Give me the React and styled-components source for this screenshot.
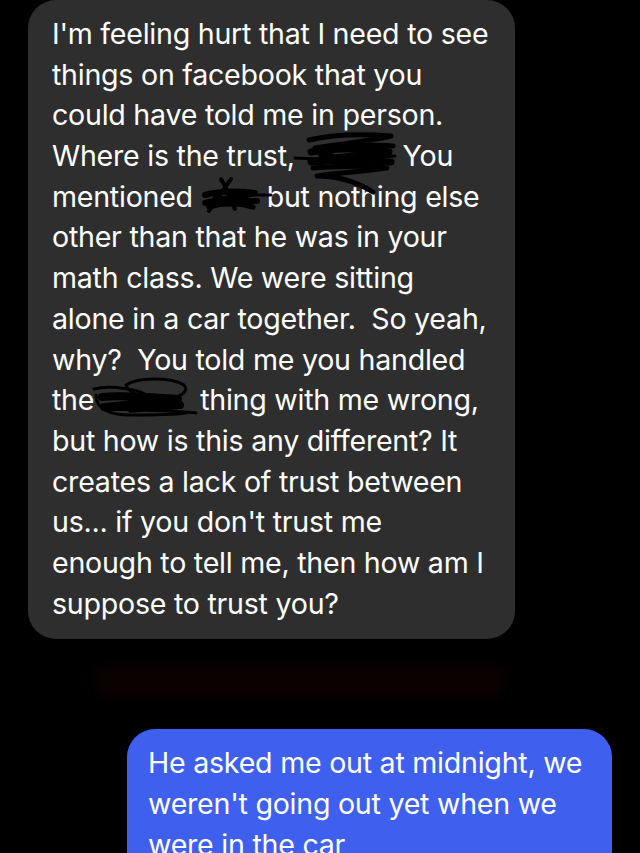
import React from "react";
import styled, { createGlobalStyle } from "styled-components";

const Global = createGlobalStyle`
  html, body {
    margin: 0;
    background: #000;
  }
  body {
    font-family: "Inter", "Roboto", "Liberation Sans", sans-serif;
    -webkit-font-smoothing: antialiased;
  }
`;

const Screen = styled.div`
  width: 640px;
  height: 853px;
  overflow: hidden;
  background: #000;
  display: flex;
  flex-direction: column;
`;

const Bubble = styled.div`
  box-sizing: border-box;
  flex: none;
  width: ${(p) => p.$width}px;
  margin-left: ${(p) => p.$left}px;
  background: ${(p) => (p.$mine ? "#3f60ef" : "#2e2e2e")};
  border-radius: 28px;
  padding: 14px 0 ${(p) => (p.$mine ? 18 : 15)}px ${(p) => (p.$mine ? 21 : 24)}px;
  color: #fff;
  font-size: 28.6px;
  line-height: 40.7px;
  letter-spacing: -0.25px;
  white-space: nowrap;
`;

const Line = styled.div`
  display: flex;
  align-items: center;
  height: 40.7px;
`;

const Redacted = styled.span`
  position: relative;
  display: inline-block;
  width: ${(p) => p.$w}px;
  height: 40px;
  svg {
    position: absolute;
    left: ${(p) => p.$dx || 0}px;
    top: ${(p) => p.$dy || 0}px;
    overflow: visible;
  }
`;

const StampRow = styled.div`
  flex: none;
  height: 90px;
  display: flex;
  align-items: center;
  padding-left: 95px;
`;

const Smear = styled.div`
  width: 410px;
  height: 30px;
  margin-top: -6px;
  background: #0d0202;
  filter: blur(6px);
  opacity: 0.9;
`;

const ScribbleA = () => (
  <svg width="104" height="62" viewBox="0 0 104 62">
    <g fill="none" stroke="#000" strokeLinecap="round" strokeLinejoin="round">
      <path d="M14 6 C40 0 72 0 96 2 C72 8 42 10 20 14 C50 12 80 10 98 12" strokeWidth="5" />
      <path d="M16 18 C40 14 70 14 94 18 C62 22 32 24 16 28 C40 26 70 26 96 28" strokeWidth="7" />
      <path d="M0 24 C30 26 62 25 100 22" strokeWidth="3" />
      <path d="M18 34 C46 32 76 32 92 34 C62 38 32 40 22 42 C42 42 62 48 78 58" strokeWidth="5" />
      <path d="M28 20 C40 28 58 32 76 24" strokeWidth="10" />
    </g>
  </svg>
);

const ScribbleB = () => (
  <svg width="74" height="40" viewBox="0 0 74 40">
    <g fill="none" stroke="#000" strokeLinecap="round" strokeLinejoin="round">
      <path d="M22 2 C28 12 32 22 36 32 M32 2 C24 14 16 24 10 34" strokeWidth="4" />
      <path d="M6 18 C20 14 40 14 56 16 C40 20 20 22 6 26 C24 26 44 24 58 24" strokeWidth="6" />
      <path d="M10 30 C24 26 40 26 54 30" strokeWidth="5" />
      <path d="M40 18 L72 18" strokeWidth="3" />
      <path d="M18 22 C26 26 36 26 44 22" strokeWidth="9" />
    </g>
  </svg>
);

const ScribbleC = () => (
  <svg width="112" height="46" viewBox="0 0 112 46">
    <g fill="none" stroke="#000" strokeLinecap="round" strokeLinejoin="round">
      <path d="M36 8 C48 0 82 0 94 8 C100 14 90 22 72 22 C52 22 38 16 36 8" strokeWidth="3" />
      <path d="M4 12 C20 8 50 12 60 20 C70 28 56 34 40 34" strokeWidth="3" />
      <path d="M6 18 C6 32 20 38 40 38 C60 38 80 38 96 36" strokeWidth="3" />
      <path d="M12 20 C30 18 60 20 88 22 C60 26 30 28 14 30 C40 30 66 30 90 28" strokeWidth="8" />
      <path d="M40 34 C60 32 80 34 106 36" strokeWidth="3" />
    </g>
  </svg>
);

export default function App() {
  return (
    <>
      <Global />
      <Screen>
        <Bubble $width={487} $left={28}>
          <Line>I'm feeling hurt that I need to see</Line>
          <Line>things on facebook that you</Line>
          <Line>could have told me in person.</Line>
          <Line>
            Where is the trust,&nbsp;
            <Redacted $w={100} $dx={-8} $dy={-2}>
              <ScribbleA />
            </Redacted>
            You
          </Line>
          <Line>
            mentioned&nbsp;
            <Redacted $w={66} $dx={-2} $dy={0}>
              <ScribbleB />
            </Redacted>
            but nothing else
          </Line>
          <Line>other than that he was in your</Line>
          <Line>math class. We were sitting</Line>
          <Line>alone in a car together.&nbsp; So yeah,</Line>
          <Line>why?&nbsp; You told me you handled</Line>
          <Line>
            the
            <Redacted $w={106} $dx={-4} $dy={-4}>
              <ScribbleC />
            </Redacted>
            thing with me wrong,
          </Line>
          <Line>but how is this any different? It</Line>
          <Line>creates a lack of trust between</Line>
          <Line>us... if you don't trust me</Line>
          <Line>enough to tell me, then how am I</Line>
          <Line>suppose to trust you?</Line>
        </Bubble>
        <StampRow>
          <Smear />
        </StampRow>
        <Bubble $width={485} $left={127} $mine>
          <Line>He asked me out at midnight, we</Line>
          <Line>weren't going out yet when we</Line>
          <Line>were in the car</Line>
        </Bubble>
      </Screen>
    </>
  );
}
